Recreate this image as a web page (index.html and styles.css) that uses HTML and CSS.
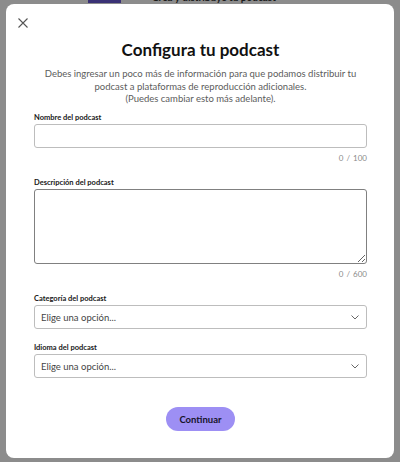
FILE: index.html
```html
<!DOCTYPE html>
<html lang="es">
<head>
    <meta charset="UTF-8">
    <meta name="viewport" content="width=device-width, initial-scale=1.0">
    <title>Configura tu podcast</title>
    <link rel="stylesheet" href="styles.css">
</head>
<body>
    <!-- pagina de fondo, tapada por el modal -->
    <header class="page-top">
        <div class="page-logo"></div>
        <p class="page-tagline">Crea y distribuye tu podcast</p>
    </header>

    <div class="overlay">
        <div class="modal">
            <button class="close" type="button" aria-label="Cerrar">
                <svg width="10" height="10" viewBox="0 0 10 10">
                    <path d="M0.5 0.5 L9.5 9.5 M9.5 0.5 L0.5 9.5" stroke="#555" stroke-width="1.1" fill="none"/>
                </svg>
            </button>

            <h1>Configura tu podcast</h1>
            <p class="intro">Debes ingresar un poco más de información para que podamos distribuir tu podcast a plataformas de reproducción adicionales.<br>(Puedes cambiar esto más adelante).</p>

            <form id="podcastForm">
                <label for="name">Nombre del podcast</label>
                <input type="text" id="name" maxlength="100">
                <span class="count">0 / 100</span>

                <label for="description" class="spaced">Descripción del podcast</label>
                <textarea id="description" maxlength="600"></textarea>
                <span class="count">0 / 600</span>

                <label for="category" class="spaced">Categoría del podcast</label>
                <div class="select-wrap">
                    <select id="category">
                        <option>Elige una opción...</option>
                    </select>
                    <svg class="chevron" width="8" height="5" viewBox="0 0 8 5">
                        <path d="M0.5 0.5 L4 4 L7.5 0.5" stroke="#666" stroke-width="1" fill="none"/>
                    </svg>
                </div>

                <label for="language" class="spaced-sm">Idioma del podcast</label>
                <div class="select-wrap">
                    <select id="language">
                        <option>Elige una opción...</option>
                    </select>
                    <svg class="chevron" width="8" height="5" viewBox="0 0 8 5">
                        <path d="M0.5 0.5 L4 4 L7.5 0.5" stroke="#666" stroke-width="1" fill="none"/>
                    </svg>
                </div>

                <button type="submit" class="submit">Continuar</button>
            </form>
        </div>
    </div>
</body>
</html>
```

FILE: styles.css
```css
body {
    margin: 0;
    font-family: Lato, "Open Sans", sans-serif;
    background: #fff;
    color: #181818;
}
.page-top {
    display: flex;
    align-items: flex-end;
    margin-top: -9px;
    padding-left: 88px;
    gap: 31px;
    height: 12px;
}
.page-logo {
    width: 33px;
    height: 12px;
    background: #6b5ad6;
}
.page-tagline {
    margin: 0;
    font-size: 10px;
    font-weight: bold;
    color: #333;
}
.overlay {
    position: fixed;
    inset: 0;
    background: rgba(0,0,0,0.45);
    padding: 4px 6px 0;
}
.modal {
    background: #fff;
    border-radius: 8px;
    padding: 12px 27px 27px 28px;
}
.close {
    display: block;
    margin: 2px 0 0 -16px;
    padding: 0;
    border: none;
    background: none;
    width: 10px;
    height: 10px;
}
.close svg {
    display: block;
}
h1 {
    margin: 12px 0 0;
    font-size: 17px;
    line-height: 20px;
    text-align: center;
    color: #111;
}
.intro {
    margin: 8px 0 0;
    font-size: 9.5px;
    line-height: 12.7px;
    text-align: center;
    color: #5c5c5c;
}
form {
    display: flex;
    flex-direction: column;
    margin-top: 7px;
}
label {
    font-size: 7.5px;
    font-weight: bold;
    line-height: 10px;
    margin-bottom: 1px;
}
label.spaced {
    margin-top: 15px;
}
label.spaced-sm {
    margin-top: 14px;
}
input, textarea, select {
    font-family: inherit;
    box-sizing: border-box;
    width: 100%;
    border: 1px solid #bdbdbd;
    border-radius: 3px;
    background: #fff;
}
input {
    height: 24px;
}
textarea {
    height: 75px;
    border-color: #808080;
    resize: vertical;
}
.count {
    margin-top: 5px;
    font-size: 8px;
    line-height: 10px;
    text-align: right;
    word-spacing: 1px;
    color: #8a8a8a;
}
.select-wrap {
    position: relative;
}
select {
    display: block;
    height: 24px;
    appearance: none;
    padding: 0 6px;
    font-size: 9.5px;
    color: #444;
}
.chevron {
    position: absolute;
    right: 8px;
    top: 10px;
}
.submit {
    align-self: center;
    margin-top: 29px;
    width: 69px;
    height: 24px;
    border: none;
    border-radius: 12px;
    background: #9d8ff4;
    color: #16142a;
    font-family: inherit;
    font-size: 9.5px;
    font-weight: bold;
}
```
